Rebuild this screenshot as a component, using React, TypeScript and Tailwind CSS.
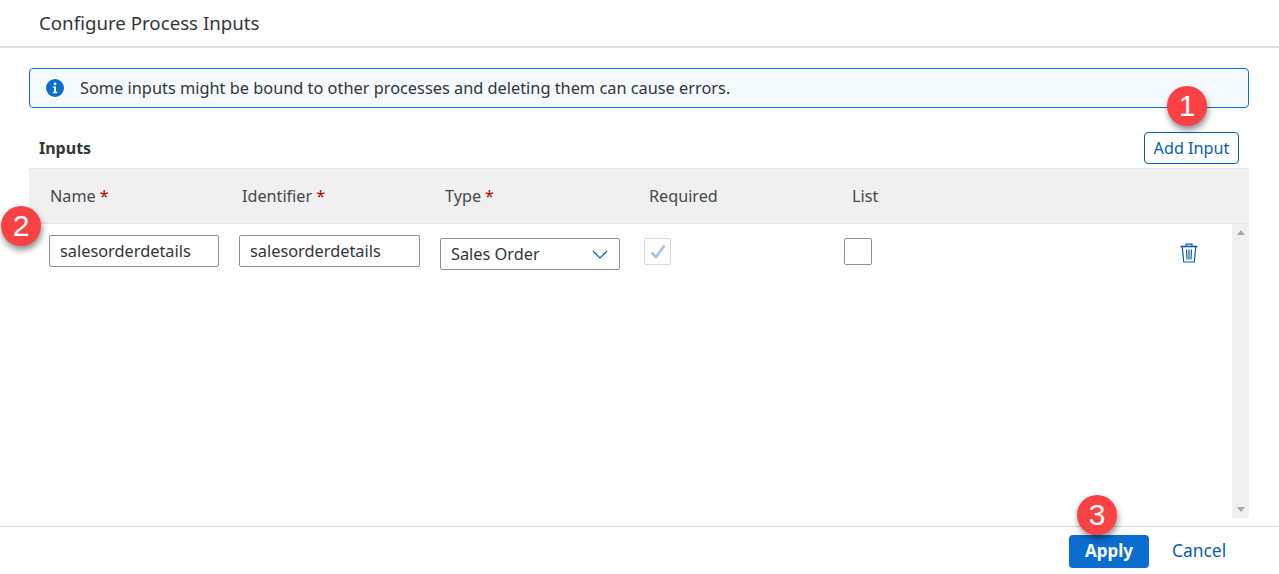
function Badge({ n, className }: { n: number; className: string }) {
  return (
    <div
      className={`absolute z-10 flex h-10 w-10 items-center justify-center rounded-full bg-[#fb4143] font-['Liberation_Sans',sans-serif] text-[30px] leading-none text-white shadow-[1px_4px_6px_rgba(0,0,0,0.45)] ${className}`}
    >
      {n}
    </div>
  );
}

function Label({ text, required, className }: { text: string; required?: boolean; className: string }) {
  return (
    <div className={className}>
      {text}
      {required && <span className="ml-1 text-[#bb0000]">*</span>}
    </div>
  );
}

function InfoIcon() {
  return (
    <svg width="18" height="18" viewBox="0 0 18 18" className="mr-4 shrink-0">
      <circle cx="9" cy="9" r="9" fill="#0a6ed1" />
      <circle cx="9" cy="4.8" r="1.4" fill="#fff" />
      <path d="M6.8 7.4h3.2v5.4h1.2v1.4H6.8v-1.4H8V8.8H6.8z" fill="#fff" />
    </svg>
  );
}

function TrashIcon() {
  return (
    <svg width="18" height="20" viewBox="0 0 18 20" fill="none" stroke="#0a5ea8" strokeWidth="1.2">
      <path d="M0.5 3.5h17" strokeWidth="1.6" />
      <path d="M6 3V1.2h6V3" />
      <path d="M2.3 4l1.4 15h10.6l1.4-15" />
      <path d="M6.5 6.5l.5 10M9 6.5v10M11.5 6.5l-.5 10" />
    </svg>
  );
}

export default function App() {
  return (
    <div className="relative flex h-[574px] w-[1279px] flex-col overflow-hidden bg-white font-['Noto_Sans',sans-serif] text-[#32363a]">
      {/* Header */}
      <div className="flex h-12 shrink-0 items-center border-b-2 border-[#dcdcdc] pl-[39px] text-[18.7px]">
        Configure Process Inputs
      </div>

      <div className="flex min-h-0 flex-1 flex-col pl-[29px] pr-[30px] pt-5">
        {/* Message strip */}
        <div className="flex h-10 shrink-0 items-center rounded border border-[#0a6ed1] bg-[#f5faff] pl-4 text-[16.33px]">
          <InfoIcon />
          Some inputs might be bound to other processes and deleting them can cause errors.
        </div>

        {/* Toolbar */}
        <div className="mt-6 flex h-8 shrink-0 items-center justify-between px-2.5">
          <span className="text-base font-bold">Inputs</span>
          <button className="h-8 w-[95px] whitespace-nowrap rounded border border-[#0a5ea8] text-[16.2px] text-[#0a5ea8]">Add Input</button>
        </div>

        {/* Table head */}
        <div className="mt-1 flex h-14 shrink-0 items-center border-y border-[#e4e4e4] bg-[#f0f0f0] pl-[21px] text-[16.2px] text-[#44484c]">
          <Label text="Name" required className="w-[192px]" />
          <Label text="Identifier" required className="w-[203px]" />
          <Label text="Type" required className="w-[204px]" />
          <div className="w-[203px]">Required</div>
          <div>List</div>
        </div>

        {/* Table body */}
        <div className="flex min-h-0 flex-1">
          <div className="flex flex-1 items-start pl-5 pt-[11px] text-[16.33px]">
            <div className="flex h-8 w-[170px] items-center rounded-[2px] border border-[#89919a] pl-2.5">salesorderdetails</div>
            <div className="ml-5 flex h-8 w-[181px] items-center rounded-[2px] border border-[#89919a] pl-2.5">salesorderdetails</div>
            <div className="ml-5 mt-[3px] flex h-8 w-[180px] items-center justify-between rounded-[2px] border border-[#89919a] pl-2.5 pr-[11px]">
              Sales Order
              <svg width="16" height="9" viewBox="0 0 16 9" fill="none" stroke="#0a5ea8" strokeWidth="1.2">
                <path d="M0.8 0.8L8 8l7.2-7.2" />
              </svg>
            </div>
            <div className="ml-6 mt-[3px] flex h-[27px] w-[27px] items-center justify-center rounded-[2px] border border-[#d5dadd]">
              <svg width="16" height="15" viewBox="0 0 16 15" fill="none" stroke="#a3c2e0" strokeWidth="2.6">
                <path d="M1.5 8.5L6 13 14.5 1.5" />
              </svg>
            </div>
            <div className="ml-[173px] mt-[3px] h-[27px] w-[28px] rounded-[2px] border border-[#89919a]" />
            <div className="ml-[308px] mt-2">
              <TrashIcon />
            </div>
          </div>
          {/* Scrollbar */}
          <div className="mb-2 flex w-[17px] shrink-0 flex-col items-center justify-between bg-[#f0f0f0] py-[6px]">
            <div className="h-0 w-0 border-x-4 border-b-[5px] border-x-transparent border-b-[#a6a6a6]" />
            <div className="h-0 w-0 border-x-4 border-t-[5px] border-x-transparent border-t-[#a6a6a6]" />
          </div>
        </div>
      </div>

      {/* Footer */}
      <div className="flex h-12 shrink-0 items-center justify-end border-t border-[#d9d9d9] pr-[53px] pt-[2px] text-[17.4px]">
        <button className="h-[33px] w-20 rounded bg-[#0a6ed1] pb-[2px] text-[17px] font-bold text-white">Apply</button>
        <button className="ml-[23px] h-[33px] w-[54px] whitespace-nowrap pb-[2px] text-[#0a5ea8]">Cancel</button>
      </div>

      <Badge n={1} className="left-[1167px] top-[86px]" />
      <Badge n={2} className="left-[1px] top-[206px]" />
      <Badge n={3} className="left-[1077px] top-[495px]" />
    </div>
  );
}
